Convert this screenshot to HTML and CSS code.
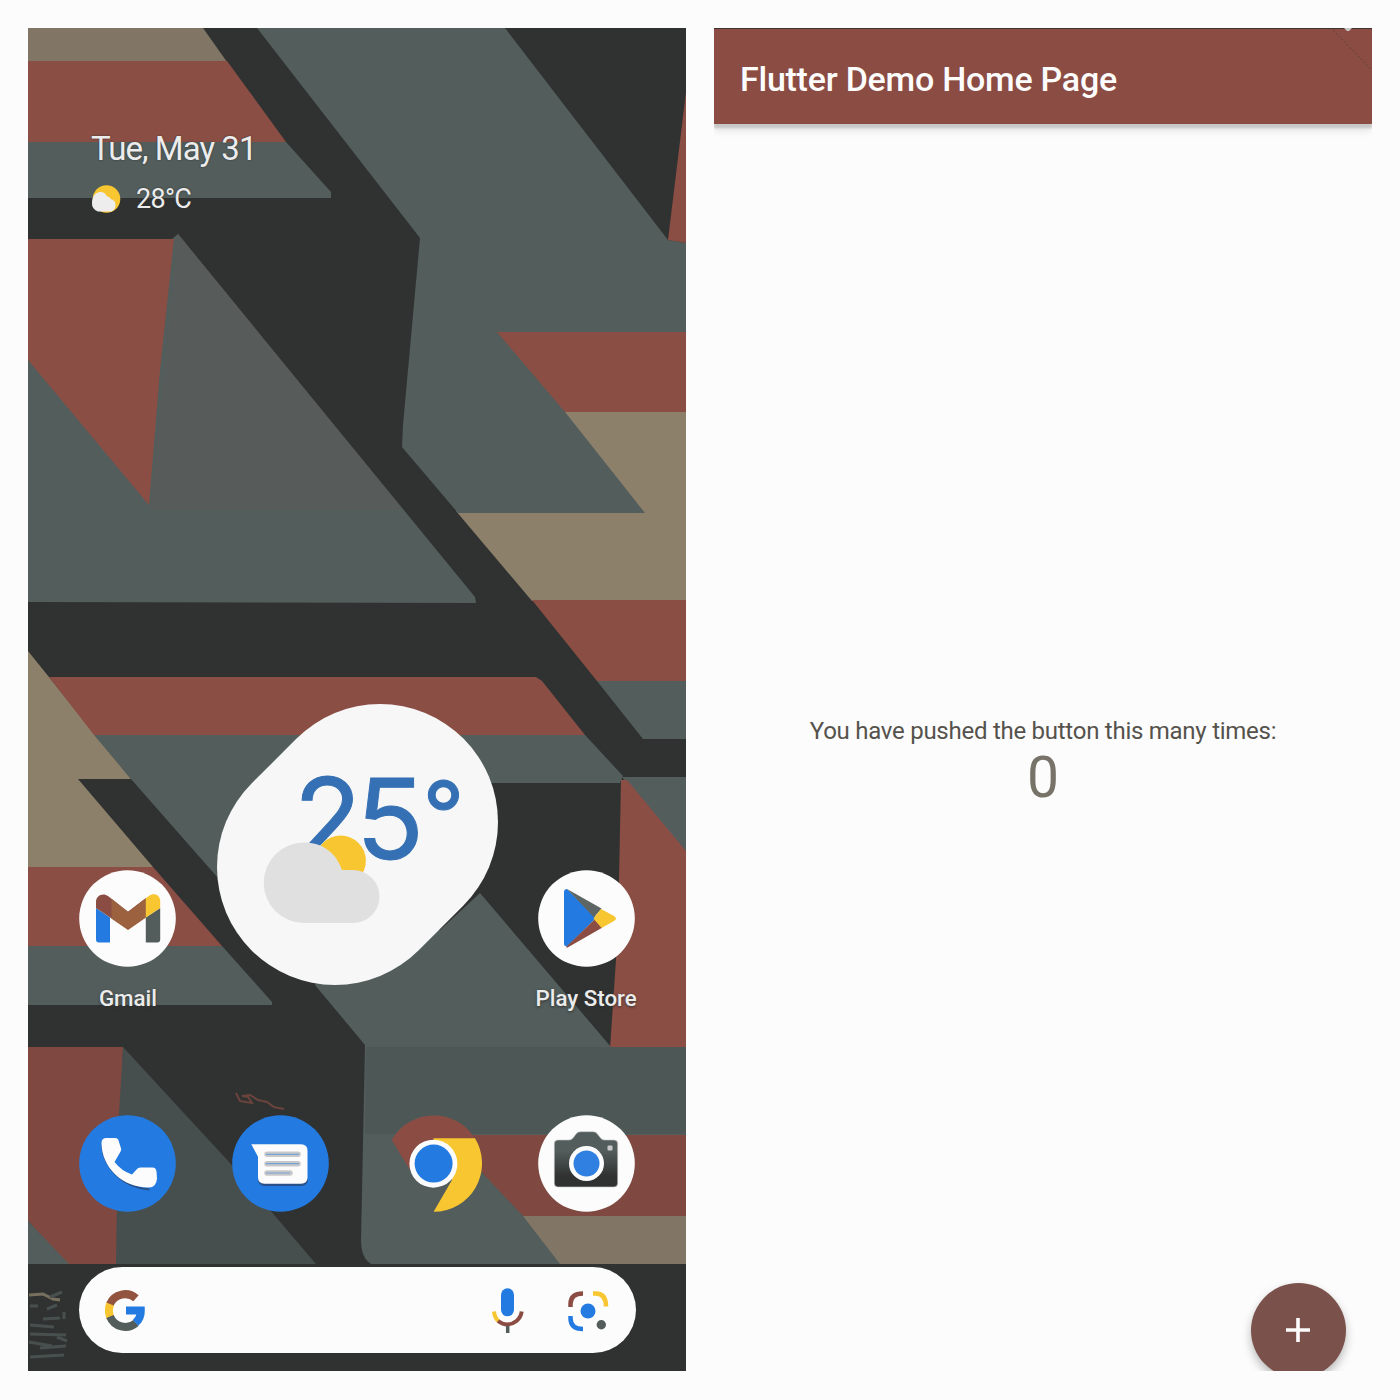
FILE: index.html
```html
<!DOCTYPE html>
<html lang="en">
<head>
<meta charset="utf-8">
<title>Home screen and Flutter demo</title>
<link rel="stylesheet" href="styles.css">
</head>
<body>
<main class="screens">
  <section class="phone">
    <svg class="wallpaper" viewBox="28 28 658 1343" preserveAspectRatio="none" aria-hidden="true">
      <rect class="ink" x="28" y="28" width="658" height="1343"/>
      <path class="tan-dim" d="M28 28H203L227 62H28z"/>
      <path class="red" d="M28 61H227L286 142H28z"/>
      <path class="slate" d="M28 142H286L331 192V198H28z"/>
      <path class="slate" d="M28 239H172L178 234L475 597L476 603L28 602z"/>
      <path class="slate-warm" d="M178 234L403 510H150z"/>
      <path class="red" d="M28 239H174L160 370L149 505L28 360z"/>
      <path class="red" d="M490 331L686 332V413H540z"/>
      <path class="tan" d="M550 412H686V601H532L456 511L600 505z"/>
      <path class="slate" d="M257 28H505L668 240L686 243V332H497L565 412L645 513H458L402 447L403 425L420 238z"/>
      <path class="red" d="M686 92V243L668 240z"/>
      <path class="red" d="M532 600H686V681H597z"/>
      <path class="slate" d="M597 681H686V739H643z"/>
      <path class="tan" d="M28 651L131 779H78L153 867H28z"/>
      <path class="red" d="M49 677H536L542 681L585 735H94z"/>
      <path class="slate" d="M94 735H585L623 776L620 783H340L240 903L131 779z"/>
      <path class="red" d="M28 867H153L222 946H28z"/>
      <path class="slate" d="M28 946H222L272 1002V1005H28z"/>
      <path class="slate" d="M622 777H686V870z"/>
      <path class="red" d="M621 780L627 780L686 851V1049H610L618 930z"/>
      <path class="red-dim" d="M440 1134H686V1217H500z"/>
      <path class="tan-dim" d="M510 1216H686V1264H550z"/>
      <path class="slate" d="M480 893L611 1047H686V1135H447L523 1216L560 1264H371Q361 1258 361 1240L365 1045L315 985L340 930H440z"/>
      <path class="slate-dim" d="M366 1047H686V1134H365z"/>
      <path class="red-dim" d="M28 1047H123L118 1264H68L28 1221z"/>
      <path class="slate-dark" d="M123 1047L230 1163L316 1264H116L118 1130z"/>
      <path class="slate" d="M28 1221L69 1264H28z"/>
      <path class="scribble" d="M236 1093l4 8 12 2-4-6-6-1 8-1 8 5 9 2 7 5 10 2"/>
      <g class="streaks">
        <path class="tan-streak" d="M29 1295l14-1 10 5 7 1"/>
        <path d="M30 1306h8M47 1309l10-4M43 1319l17-1M30 1325l24 2M30 1334l36 1M29 1342l23 4M40 1348l26-2M30 1357l34-2M62 1292l-12 5M64 1312v7M57 1337l10 4"/>
      </g>
    </svg>

    <header class="glance">
      <div class="date">Tue, May 31</div>
      <div class="now">
        <svg class="now-icon" viewBox="0 0 30 30"><circle cx="15.500" cy="15" r="13.800" fill="#f8c631"/><path d="M7 27.500A8 8 0 0 1 1 19C1 11 6 7.500 10 8q4 0 6 4.500 3 0 3.500 2.500 5 1 5 6 0 4.500-4 6.500z" fill="#ededed"/></svg>
        <span class="now-temp">28°C</span>
      </div>
    </header>

    <div class="grid widgets">
      <div class="app">
        <svg class="icon" viewBox="79.500 870 97 97">
          <circle cx="128" cy="918.500" r="48.300" fill="#fcfcfc"/>
          <path d="M96.500 908l14 9.500v25h-11q-3 0-3-3z" fill="#237be2"/>
          <path d="M146.300 917.500l14.400-9.500v31.500q0 3-3 3h-11.400z" fill="#525d5c"/>
          <path d="M96.500 908v-6c0-7 7.500-9.500 12-6l20 15.700 18-13.700v19l-18 12.500z" fill="#8b4c43"/>
          <path d="M112 907.500v-8.800l16.500 13 18-13.700v19.500l-18 12.500-16.500-11.500z" fill="#9c6240"/>
          <path d="M146.300 917.500v-19.300l3-2.200c5-4 11.400-1 11.400 5v7z" fill="#f8c631"/>
        </svg>
        <span class="label">Gmail</span>
      </div>
      <svg class="weather" viewBox="217 704 281 281">
        <path class="blob" d="M380 822L335 867"/>
        <text class="temp" y="859" x="293.500 356">25<tspan class="degree" x="422.500" y="847">°</tspan></text>
        <circle cx="340.700" cy="860.700" r="25.200" fill="#f8c631"/>
        <path d="M304 842.500c18 0 32 10 38 27.500h11a26.500 26.500 0 0 1 0 53H304a40.200 40.200 0 0 1 0-80.500z" fill="#e0e0e0"/>
      </svg>
      <div class="app">
        <svg class="icon" viewBox="538 870 97 97">
          <circle cx="586.500" cy="918.500" r="48.300" fill="#fcfcfc"/>
          <path d="M564 892q0-3 3-3l29 29-29 28.500q-3 0-3-3z" fill="#237be2"/>
          <path d="M567 889l34.500 19.500-7.500 9z" fill="#5d6664"/>
          <path d="M566 947l28.500-27.500 8 8-34 19.500q-1.500 1-2.500 0z" fill="#8b4c43"/>
          <path d="M601 909l13 7q4 2.500 0 5l-12.500 7-8-9.500z" fill="#f8c631"/>
        </svg>
        <span class="label">Play Store</span>
      </div>
    </div>

    <nav class="grid dock">
      <svg class="icon" viewBox="79.500 1115 97 97">
        <circle cx="128" cy="1163.500" r="48.300" fill="#237be2"/>
        <path d="M102.500 1145C104 1168 124 1188 150 1189.500" fill="none" stroke="#28518a" stroke-width="2"/>
        <path d="M102 1143q0-5 5-5h8.500q3.500 0 4 4l2.200 7q0 2-1.500 4l-5.200 9q7 9 17.500 12.500l4.500-5q1.500-2 4-2h12q3.500 0 4 4l.5 7q-.7 9-8 9C124 1188 102 1168 102 1143z" fill="#fcfcfc"/>
      </svg>
      <svg class="icon" viewBox="232 1115 97 97">
        <circle cx="280.500" cy="1163.500" r="48.300" fill="#237be2"/>
        <path d="M258 1179q0 7 7 7h36q7 0 7-7z" fill="#28518a"/>
        <path d="M251.300 1144.300H301q6.500 0 6.500 6.500v26.500q0 6.500-6.500 6.500h-36.500q-6.500 0-6.500-6.500v-20.500z" fill="#fcfcfc"/>
        <path d="M267 1154.300h31M267 1163.700h31M267 1173h23" stroke="#c8c8c8" stroke-width="5.500" stroke-linecap="round"/>
        <path d="M266 1154.300h33M266 1163.700h33M266 1173h24" stroke="#76a2d5" stroke-width="1.200"/>
      </svg>
      <svg class="icon" viewBox="385 1115 97 97">
        <circle cx="433.300" cy="1163.500" r="48.300" fill="#525d5c"/>
        <path d="M391.700 1140A48.300 48.300 0 0 1 475 1138.500L433 1163L410 1170z" fill="#8b4c43"/>
        <path d="M433.300 1138.300H475A48.300 48.300 0 0 1 433.600 1211.700L452 1180z" fill="#f8c631"/>
        <circle cx="433.400" cy="1163.700" r="24" fill="#fcfcfc"/>
        <circle cx="433.600" cy="1163.600" r="19" fill="#237be2"/>
      </svg>
      <svg class="icon" viewBox="538 1115 97 97">
        <defs><linearGradient id="body" x2="0" y2="1"><stop offset=".35" stop-color="#525d5c"/><stop offset=".8" stop-color="#303231"/></linearGradient></defs>
        <circle cx="586.500" cy="1163.500" r="48.300" fill="#fcfcfc"/>
        <path d="M558 1140h11q2.500 0 4-2l3-4q1.500-2.300 4.500-2.300h12.500q3 0 4.500 2.300l3 4q1.500 2 4 2h9.500q3.700 0 3.700 3.700v39.600q0 3.700-3.700 3.700h-56q-3.700 0-3.700-3.700v-39.600q0-3.700 3.700-3.700z" fill="url(#body)" stroke="#c8c8c8" stroke-width=".6"/>
        <circle cx="586.500" cy="1163.500" r="17.500" fill="#fcfcfc"/>
        <circle cx="586.500" cy="1163.500" r="13" fill="#2f80e0"/>
        <rect x="607.500" y="1145.500" width="5" height="5" rx="1" fill="#c8c8c8"/>
      </svg>
    </nav>

    <div class="search">
      <svg class="g-logo" viewBox="105 1288 42 44" fill="none" stroke-width="8">
        <path d="M110.500 1303.500A16.500 16.500 0 0 0 110.500 1317.500" stroke="#f8c631"/>
        <path d="M110 1304A16.500 16.500 0 0 1 136 1298.300" stroke="#92543f"/>
        <path d="M110 1316.500A16.500 16.500 0 0 0 136 1323" stroke="#525d5c"/>
        <path d="M126 1310.500H140.800Q141 1318 135.500 1322.800" stroke="#237be2"/>
      </svg>
      <svg class="mic" viewBox="490 1286 35 48" fill="none">
        <rect x="501" y="1288.300" width="13" height="28" rx="6.500" fill="#237be2"/>
        <g stroke-width="4"><path d="M494 1311.500Q494.500 1318 499 1321.500" stroke="#f8c631"/>
        <path d="M498 1321Q507.500 1328 516.500 1321Q521 1317 521.700 1311.500" stroke="#8b4c43"/></g>
        <path d="M507.700 1326v7" stroke="#525d5c" stroke-width="3.500"/>
      </svg>
      <svg class="lens" viewBox="567 1288 43 43" fill="none" stroke-width="4.500">
        <path d="M570.500 1306V1303Q570.500 1292.500 583 1292.500" stroke="#8b4c43"/>
        <path d="M593 1292.500H596Q606 1292.500 606 1305.500" stroke="#f8c631"/>
        <path d="M570.500 1315V1317Q570.500 1328 583 1328" stroke="#237be2"/>
        <circle cx="588" cy="1310" r="7.500" fill="#237be2"/>
        <circle cx="601.300" cy="1323.700" r="4.700" fill="#525d5c"/>
      </svg>
    </div>
  </section>

  <section class="demo">
    <header class="appbar">
      <h1 class="title">Flutter Demo Home Page</h1>
      <svg class="ribbon" viewBox="0 0 48 48"><path d="M9 2L38 32L48 42" fill="none" stroke="#5b403b" stroke-dasharray="2 2"/><path d="M20 0h8l-3 3h-2z" fill="#c8c8c8"/></svg>
    </header>
    <div class="counter">
      <p class="caption">You have pushed the button this many times:</p>
      <p class="count">0</p>
    </div>
    <button class="fab" aria-label="Increment"><svg viewBox="0 0 24 24"><path d="M12 0v24M0 12h24" stroke="#fcfcfc" stroke-width="3.600"/></svg></button>
  </section>
</main>
</body>
</html>
```

FILE: styles.css
```css
* { box-sizing: border-box; }
body { margin: 0; background: #fcfcfc; font-family: Roboto, "Liberation Sans", sans-serif; }
svg { display: block; }

.screens {
  display: grid;
  grid-template-columns: 658px 658px;
  gap: 28px;
  width: 1400px;
  height: 1400px;
  padding: 28px;
}

.phone {
  position: relative;
  display: flex;
  flex-direction: column;
  height: 1343px;
  overflow: hidden;
  color: #ececec;
}
.wallpaper { position: absolute; inset: 0; width: 100%; height: 100%; }
.phone > :not(.wallpaper) { z-index: 1; }
.ink { fill: #303231; }
.slate { fill: #525d5c; }
.slate-warm { fill: #575b59; }
.slate-dim { fill: #4c5756; }
.slate-dark { fill: #464f4e; }
.red { fill: #8b4e44; }
.red-dim { fill: #7f4941; }
.tan { fill: #8c806b; }
.tan-dim { fill: #817665; }
.scribble { fill: none; stroke: #6b433d; stroke-width: 2; }
.streaks { fill: none; stroke: #48504f; stroke-width: 3; }
.tan-streak { stroke: #77705f; }

.glance { height: 676px; padding: 101px 0 0 63px; }
.date { font-size: 33px; line-height: 40px; letter-spacing: -.95px; text-shadow: 0 0 2px #303231; }
.now { display: flex; align-items: center; gap: 15px; height: 30px; margin-top: 15px; }
.now-icon { width: 30px; height: 30px; }
.now-temp { font-size: 27px; line-height: 30px; letter-spacing: -.7px; text-shadow: 0 0 2px #303231; }

.grid { display: grid; grid-template-columns: repeat(4, 1fr); padding: 0 23.5px; justify-items: center; }
.icon { width: 97px; height: 97px; }
.widgets { height: 411px; align-items: start; }
.app { display: flex; flex-direction: column; align-items: center; gap: 17px; padding-top: 166px; }
.label { font-size: 22.3px; line-height: 28px; white-space: nowrap; font-weight: 500; text-shadow: 0 1px 3px #303231; }
.weather { grid-column: span 2; width: 281px; height: 281px; }
.blob { stroke: #f7f7f7; stroke-width: 236; stroke-linecap: round; }
.temp { font-family: Inter, sans-serif; font-size: 112px; fill: #3570b4; stroke: #3570b4; stroke-width: 1px; }
.degree { font-size: 92px; }
.dock { height: 97px; }

.search {
  display: flex;
  align-items: center;
  width: 557px;
  height: 86px;
  margin: 55px 0 0 51px;
  padding: 0 26px 0 26px;
  border-radius: 43px;
  background: #fcfcfc;
}
.g-logo { width: 42px; height: 44px; margin-right: auto; }
.mic { width: 35px; height: 48px; }
.lens { width: 43px; height: 43px; margin-left: 42px; }

.demo { position: relative; height: 1343px; overflow: hidden; display: flex; flex-direction: column; }
.appbar {
  position: relative;
  display: flex;
  align-items: center;
  flex: none;
  height: 96px;
  padding: 4px 0 0 26px;
  border-top: 1px solid #3f3432;
  background: #8b4c43;
  box-shadow: 0 4px 2px #c8c8c8, 0 6px 8px #dedede;
}
.title { margin: 0; color: #fcfcfc; font-size: 34px; line-height: 40px; font-weight: 500; letter-spacing: -.25px; white-space: nowrap; }
.ribbon { position: absolute; top: -1px; right: 0; width: 48px; height: 48px; }
.counter { flex: 1; display: flex; flex-direction: column; align-items: center; padding-top: 592px; }
.caption { margin: 0; font-size: 24px; line-height: 30px; letter-spacing: -.26px; color: #55524c; white-space: nowrap; }
.count { margin: 0; font-size: 57px; line-height: 64px; color: #777369; }
.fab {
  position: absolute;
  left: 536.5px;
  top: 1254.5px;
  display: grid;
  place-items: center;
  width: 95px;
  height: 95px;
  padding: 0;
  border: 0;
  border-radius: 50%;
  background: #7b524b;
  box-shadow: 0 5px 10px #b8b8b8;
}
.fab svg { width: 24px; height: 24px; }
```
